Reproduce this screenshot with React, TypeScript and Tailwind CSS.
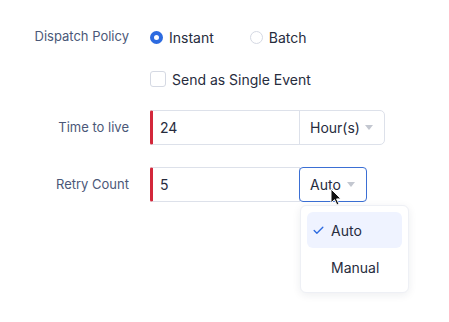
import { Check } from 'lucide-react'

/** 左側のラベル */
function Label({ children }: { children: string }) {
  return <div className="w-[129px] shrink-0 text-right text-[13px] text-[#4b5878]">{children}</div>
}

/** 下向きの小さい三角 */
function Caret() {
  return (
    <svg width="8" height="5" viewBox="0 0 8 5" className="ml-auto">
      <path d="M0 0h8L4 5z" fill="#c3c7d0" />
    </svg>
  )
}

export default function App() {
  return (
    <div
      className="w-[449px] h-[322px] bg-white text-[#272c3d] pt-[27px]"
      style={{ fontFamily: 'Inter, "Noto Sans", sans-serif' }}
    >
      {/* Dispatch Policy */}
      <div className="flex items-center h-[20px] gap-[21px]">
        <Label>Dispatch Policy</Label>
        <div className="flex items-center text-[14px]">
          <span className="w-[13px] h-[13px] rounded-full border-[4px] border-[#2d6be0] bg-white" />
          <span className="ml-[6px]">Instant</span>
          <span className="ml-[36px] w-[13px] h-[13px] rounded-full border border-[#d5d9e3] bg-white" />
          <span className="ml-[6px]">Batch</span>
        </div>
      </div>

      {/* Send as Single Event */}
      <div className="flex items-center h-[16px] mt-[24px] pl-[150px] text-[14px]">
        <span className="w-[16px] h-[16px] rounded-[3px] border border-[#d5d9e3]" />
        <span className="ml-[6px]">Send as Single Event</span>
      </div>

      {/* Time to live */}
      <div className="flex items-center mt-[23px] gap-[21px]">
        <Label>Time to live</Label>
        <div className="flex h-[35px] text-[14px]">
          <div className="w-[150px] flex items-center border border-[#dde1ea] border-l-[3px] border-l-[#d3283b] rounded-l-[2px] pl-[7px]">
            24
          </div>
          <div className="w-[86px] -ml-px flex items-center border border-[#dde1ea] rounded-r-[5px] pl-[10px] pr-[11px]">
            Hour(s)
            <Caret />
          </div>
        </div>
      </div>

      {/* Retry Count */}
      <div className="flex items-center mt-[22px] gap-[21px]">
        <Label>Retry Count</Label>
        <div className="flex h-[35px] text-[14px]">
          <div className="w-[150px] flex items-center border border-[#dde1ea] border-l-[3px] border-l-[#d3283b] rounded-l-[2px] pl-[7px]">
            5
          </div>
          <div className="relative w-[68px] -ml-px flex items-center border border-[#3b6fd4] rounded-[4px] pl-[10px] pr-[11px]">
            Auto
            <Caret />
            {/* マウスカーソル */}
            <svg width="12" height="18" viewBox="0 0 12 18" className="absolute left-[30px] top-[20px]">
              <path d="M1 1v14l3.5-3.3 2.4 5.3 2.1-.9-2.4-5.2H11z" fill="#111" stroke="#fff" strokeWidth="1" />
            </svg>
            {/* ドロップダウン */}
            <div className="absolute left-0 top-[37px] w-[109px] rounded-[6px] bg-white border border-[#eef0f5] shadow-[0_2px_8px_rgba(30,40,70,0.08)] p-[6px] z-10">
              <div className="flex items-center h-[36px] rounded-[6px] bg-[#eff3ff] pl-[5px]">
                <Check size={13} strokeWidth={2.5} className="text-[#2d6be0]" />
                <span className="ml-[6px]">Auto</span>
              </div>
              <div className="flex items-center h-[38px] pl-[24px]">Manual</div>
            </div>
          </div>
        </div>
      </div>
    </div>
  )
}
